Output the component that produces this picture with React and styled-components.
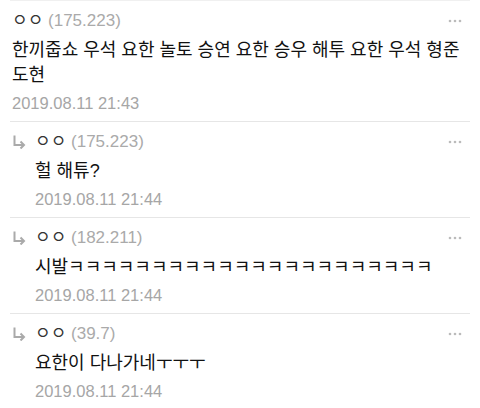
import React from "react";
import styled, { createGlobalStyle } from "styled-components";

const GlobalStyle = createGlobalStyle`
  body {
    margin: 0;
    background: #fff;
    font-family: "Liberation Sans", "Noto Sans CJK KR", sans-serif;
  }
`;

const comments = [
  {
    name: "ㅇㅇ",
    ip: "(175.223)",
    text: "한끼줍쇼 우석 요한 놀토 승연 요한 승우 해투 요한 우석 형준 도현",
    date: "2019.08.11 21:43",
  },
  { reply: true, name: "ㅇㅇ", ip: "(175.223)", text: "헐 해튜?", date: "2019.08.11 21:44" },
  {
    reply: true,
    name: "ㅇㅇ",
    ip: "(182.211)",
    text: "시발" + "ㅋ".repeat(22),
    date: "2019.08.11 21:44",
  },
  { reply: true, name: "ㅇㅇ", ip: "(39.7)", text: "요한이 다나가네ㅜㅜㅜ", date: "2019.08.11 21:44" },
];

function ReplyArrow() {
  return (
    <svg width="14" height="14" viewBox="0 0 14 14" fill="none">
      <path d="M2.5 0.5 V10 H12" stroke="#aaa" strokeWidth="2" />
      <path d="M8.5 6.5 L12 10 L8.5 13.5" stroke="#aaa" strokeWidth="2" />
    </svg>
  );
}

function MoreDots() {
  return (
    <svg width="14" height="4" viewBox="0 0 14 4">
      <circle cx="2" cy="2" r="1.3" fill="#bbb" />
      <circle cx="7" cy="2" r="1.3" fill="#bbb" />
      <circle cx="12" cy="2" r="1.3" fill="#bbb" />
    </svg>
  );
}

export default function App() {
  return (
    <>
      <GlobalStyle />
      <List>
        {comments.map((c, i) => (
          <Row key={i} $first={i === 0}>
            {c.reply && (
              <Indent>
                <ReplyArrow />
              </Indent>
            )}
            <Content>
              <Header>
                <span>
                  <Name>{c.name}</Name> <Ip>{c.ip}</Ip>
                </span>
                <MoreDots />
              </Header>
              <Body>{c.text}</Body>
              <Date>{c.date}</Date>
            </Content>
          </Row>
        ))}
      </List>
    </>
  );
}

const List = styled.div`
  margin: 0 10px;
`;

const Row = styled.div`
  display: flex;
  border-top: 1px solid ${(p) => (p.$first ? "#f0f0f0" : "#e6e6e6")};
  padding: 10px 8px 5px 2px;
`;

const Indent = styled.div`
  width: 23px;
  flex-shrink: 0;
  padding-top: 3px;
`;

const Content = styled.div`
  flex: 1;
  min-width: 0;
`;

const Header = styled.div`
  display: flex;
  justify-content: space-between;
  align-items: center;
  line-height: 20px;
  font-size: 17px;
`;

const Name = styled.span`
  color: #333;
`;

const Ip = styled.span`
  color: #aaa;
`;

const Body = styled.div`
  margin-top: 7px;
  font-size: 18px;
  line-height: 25px;
  color: #111;
  word-break: keep-all;
`;

const Date = styled.div`
  margin-top: 2px;
  font-size: 16.5px;
  line-height: 26px;
  color: #a6a6a6;
`;
